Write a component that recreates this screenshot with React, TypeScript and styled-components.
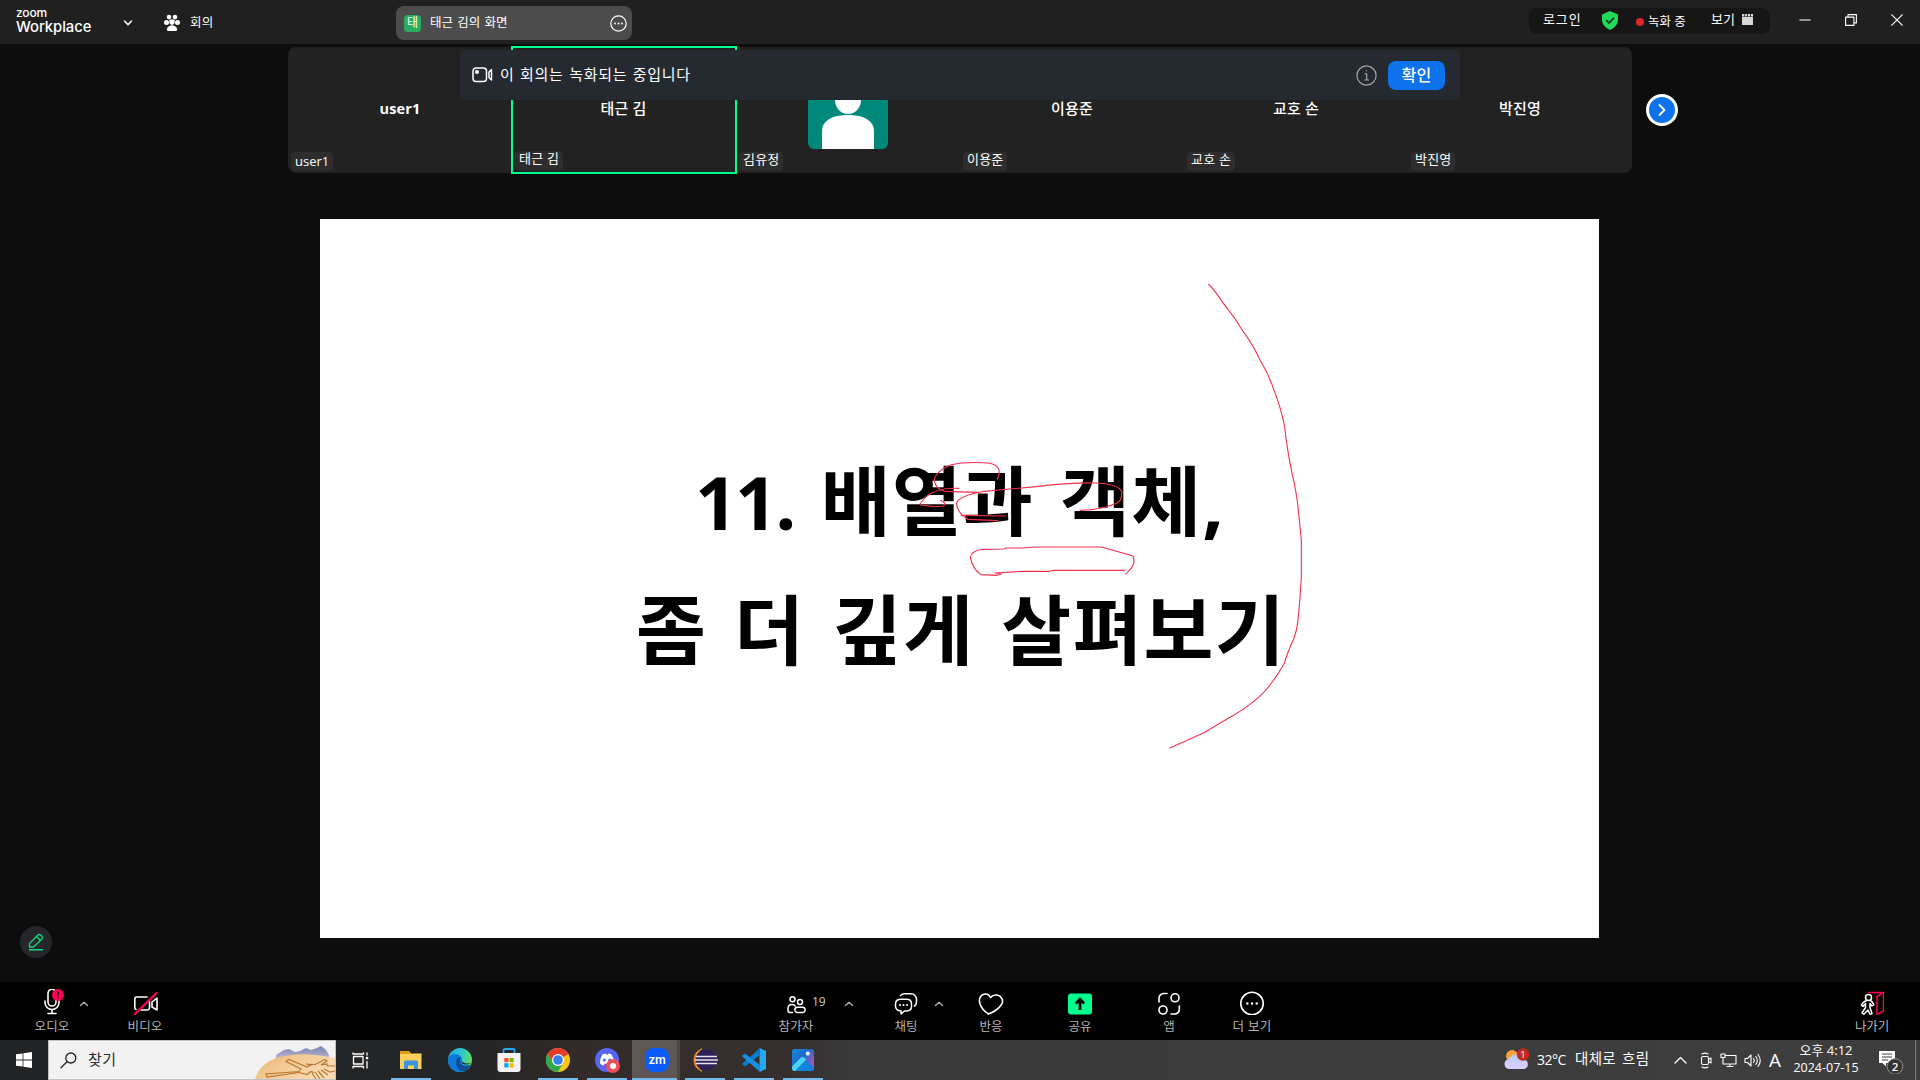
import React from "react";
import styled, { createGlobalStyle } from "styled-components";

const Global = createGlobalStyle`
  * { box-sizing: border-box; }
  body { margin: 0; background: #0d0d0d; overflow: hidden; }
  svg { display: block; flex: none; }
`;
const fontStack = `"Open Sans", "Noto Sans CJK KR", sans-serif`;

const Screen = styled.div`
  position: relative;
  width: 1920px;
  height: 1080px;
  display: flex;
  flex-direction: column;
  background: #0d0d0d;
  color: #fff;
  font-family: ${fontStack};
  overflow: hidden;
`;
const Text = styled.span<{ $size?: number; $ls?: number; $ws?: number; $weight?: number; $color?: string; $lh?: number }>`
  display: block;
  white-space: nowrap;
  font-size: ${(p) => p.$size ?? 12}px;
  letter-spacing: ${(p) => p.$ls ?? 0}px;
  word-spacing: ${(p) => p.$ws ?? 0}px;
  font-weight: ${(p) => p.$weight ?? 400};
  color: ${(p) => p.$color ?? "#fff"};
  line-height: ${(p) => p.$lh ?? 16}px;
`;

/* ---------- Title bar ---------- */
const TitleBar = styled.header`
  height: 44px;
  flex: none;
  display: flex;
  align-items: flex-start;
  background: #202020;
`;
const Brand = styled.div`
  width: 122px;
  padding: 6px 0 0 16px;
  font-family: Inter, sans-serif;
`;
const BrandSmall = styled.div`
  font-size: 12px;
  line-height: 13px;
  letter-spacing: -0.15px;
  font-weight: 500;
`;
const BrandLarge = styled.div`
  font-size: 14.8px;
  line-height: 16px;
  font-weight: 500;
  letter-spacing: -0.05px;
`;
const MeetingTab = styled.div`
  display: flex;
  width: 274px;
  padding-top: 14px;
  gap: 10px;
`;
const DownArrow = styled.div`
  width: 32px;
  padding-top: 5px;
`;
const ShareTab = styled.div`
  width: 236px;
  height: 34px;
  margin-top: 6px;
  padding: 0 5px 0 8px;
  border-radius: 8px;
  background: #4c4c4c;
  display: flex;
  align-items: center;
`;
const MiniAvatar = styled.div`
  width: 17px;
  height: 17px;
  margin: 0 9px 0 0;
  border-radius: 4px;
  background: #27ae60;
  display: flex;
  justify-content: center;
`;
const Grow = styled.div`flex: 1;`;
const StatusPill = styled.div`
  width: 241px;
  height: 26px;
  margin: 8px 0 0 897px;
  padding-left: 14px;
  border-radius: 8px;
  background: #161616;
  display: flex;
`;
const PillPart = styled.div<{ $w: number; $top: number }>`
  width: ${(p) => p.$w}px;
  padding-top: ${(p) => p.$top}px;
  display: flex;
  gap: 4px;
`;
const RecDot = styled.i`
  width: 8px;
  height: 8px;
  margin-top: 4px;
  border-radius: 50%;
  background: #e02828;
`;
const WindowButtons = styled.div`
  display: flex;
  padding: 14px 0 0 29px;
  gap: 34px;
`;

/* ---------- Participants strip ---------- */
const Strip = styled.section`
  height: 126px;
  margin: 3px 0 0 288px;
  flex: none;
  display: flex;
  align-items: center;
`;
const Tiles = styled.div`
  width: 1344px;
  height: 126px;
  border-radius: 8px;
  background: #222;
  display: flex;
`;
const Tile = styled.div<{ $active?: boolean }>`
  width: ${(p) => (p.$active ? 226 : 224)}px;
  height: ${(p) => (p.$active ? 128 : 126)}px;
  margin: ${(p) => (p.$active ? "-1px -1px -1px -1px" : "0")};
  padding: ${(p) => (p.$active ? "0 0 2px 2px" : "0 0 2px 3px")};
  border: ${(p) => (p.$active ? "2px solid #00ff8c" : "0")};
  display: flex;
  flex-direction: column;
  flex: none;
`;
const TileFace = styled.div`
  flex: 1;
  padding: 19px 3px 0 0;
  display: flex;
  align-items: center;
  justify-content: center;
`;
const NameShift = styled.div<{ $up: number }>`
  margin-bottom: ${(p) => p.$up}px;
`;
const TileName = styled.div`
  align-self: flex-start;
  height: 19px;
  padding: 0 4px;
  border-radius: 4px;
  background: #2d2d2d;
`;
const NextButton = styled.button`
  width: 32px;
  height: 32px;
  margin-left: 14px;
  padding: 0;
  border: 3px solid #fff;
  border-radius: 50%;
  background: #0e72ed;
  display: flex;
  align-items: center;
  justify-content: center;
`;
const Banner = styled.div`
  position: absolute;
  left: 460px;
  top: 50px;
  width: 1000px;
  height: 50px;
  padding: 0 15px 0 12px;
  border-radius: 5px;
  background: #252a31;
  display: flex;
  align-items: center;
`;
const ConfirmButton = styled.button`
  width: 57px;
  height: 29px;
  margin-left: 11px;
  padding: 0;
  border: 0;
  border-radius: 8px;
  background: #0e72ed;
  font-family: inherit;
`;

/* ---------- Shared slide ---------- */
const Stage = styled.main`
  flex: 1;
  display: flex;
  padding: 46px 0 0 320px;
`;
const Slide = styled.div`
  position: relative;
  width: 1279px;
  height: 719px;
  background: #fff;
  padding-top: 216px;
`;
const SlideLine = styled.div<{ $left: number; $ls: number; $ws: number }>`
  height: 129px;
  line-height: 131px;
  margin-left: ${(p) => p.$left}px;
  color: #000;
  font-size: 76px;
  font-weight: 700;
  letter-spacing: ${(p) => p.$ls}px;
  word-spacing: ${(p) => p.$ws}px;
  white-space: nowrap;
  font-family: "Open Sans", "Noto Sans CJK KR", sans-serif;
`;
const Ordinal = styled.span`
  font-size: 74px;
  letter-spacing: -2.2px;
`;
const Ink = styled.svg`
  position: absolute;
  inset: 0;
`;
const PenButton = styled.button`
  position: absolute;
  left: 20px;
  top: 926px;
  width: 32px;
  height: 32px;
  padding: 0;
  border: 0;
  border-radius: 50%;
  background: #25272b;
  display: flex;
  align-items: center;
  justify-content: center;
`;

/* ---------- Meeting toolbar ---------- */
const Toolbar = styled.footer`
  height: 58px;
  flex: none;
  background: #000;
  display: flex;
`;
const Tool = styled.div<{ $ml: number; $w: number }>`
  position: relative;
  width: ${(p) => p.$w}px;
  margin-left: ${(p) => p.$ml}px;
  padding-top: 7px;
  display: flex;
  flex-direction: column;
  align-items: center;
  gap: 3px;
`;
const Caret = styled.div<{ $ml: number }>`
  width: 10px;
  margin-left: ${(p) => p.$ml}px;
  padding-top: 19px;
`;
const Count = styled.div`
  position: absolute;
  left: 34px;
  top: 12px;
`;

/* ---------- Taskbar ---------- */
const Taskbar = styled.nav`
  height: 40px;
  flex: none;
  display: flex;
  background: linear-gradient(90deg, #222426 0, #242526 480px, #332b29 590px, #35302e 790px, #3a3a3a 850px, #3c3c3c 1500px, #3e3e3e 1920px);
`;
const Start = styled.div`
  width: 48px;
  display: flex;
  align-items: center;
  justify-content: center;
`;
const Search = styled.div`
  width: 288px;
  border: 1px solid #c2c2c2;
  background: #f2f2f2;
  display: flex;
  align-items: center;
  padding-left: 11px;
  gap: 11px;
`;
const AppButton = styled.div<{ $w: number; $line?: boolean; $active?: boolean }>`
  width: ${(p) => p.$w}px;
  padding-left: ${(p) => (p.$active ? 4 : 0)}px;
  display: flex;
  align-items: center;
  justify-content: center;
  background: ${(p) => (p.$active ? "#5f5753" : "transparent")};
  border-right: ${(p) => (p.$active ? "3px solid #4d4643" : "0")};
  box-shadow: ${(p) => (p.$line ? "inset 0 -2px #76b9ed" : "none")};
`;
const AppGap = styled.div<{ $w: number }>`width: ${(p) => p.$w}px;`;
const Tray = styled.div`
  margin-left: auto;
  display: flex;
  align-items: center;
  width: 417px;
`;
const TraySlot = styled.div<{ $w: number; $pad?: number }>`
  width: ${(p) => p.$w}px;
  padding-left: ${(p) => p.$pad ?? 0}px;
  flex: none;
`;
const Clock = styled.div`
  width: 90px;
  padding-bottom: 2px;
  text-align: center;
`;
const DesktopEdge = styled.div`
  width: 5px;
  height: 40px;
  margin-left: auto;
  border-left: 1px solid #7b7b7b;
`;

type Icon = { w: number; h: number; vb?: string; children: React.ReactNode; sw?: number; color?: string };
const Line = ({ w, h, vb, children, sw = 1.6, color = "#fff" }: Icon) => (
  <svg width={w} height={h} viewBox={vb ?? `0 0 ${w} ${h}`} fill="none" stroke={color} strokeWidth={sw} strokeLinecap="round" strokeLinejoin="round">
    {children}
  </svg>
);

const people = [
  { name: "user1", latin: true },
  { name: "태근 김", active: true },
  { name: "김유정", avatar: true },
  { name: "이용준" },
  { name: "교호 손" },
  { name: "박진영" },
];

const Portrait = () => (
  <svg width="80" height="80" viewBox="0 0 80 80">
    <rect width="80" height="80" rx="6" fill="#00897b" />
    <ellipse cx="40" cy="31" rx="13" ry="14" fill="#fff" />
    <path d="M14 80V62Q14 51 29 47Q40 45 51 47Q66 51 66 62V80Z" fill="#fff" />
  </svg>
);

const UpCaret = ({ ml }: { ml: number }) => (
  <Caret $ml={ml}>
    <Line w={10} h={6} sw={1.5} color="#aaa"><path d="M1.5 4.5 5 1.3 8.500 4.500" /></Line>
  </Caret>
);

const ToolLabel = ({ children, ls = 0.1 }: { children: string; ls?: number }) => (
  <Text $size={12.5} $color="#b4b4b4" $ls={ls} $lh={18}>{children}</Text>
);

export default function App() {
  return (
    <Screen>
      <Global />
      <TitleBar>
        <Brand>
          <BrandSmall>zoom</BrandSmall>
          <BrandLarge>Workplace</BrandLarge>
        </Brand>
        <MeetingTab>
          <DownArrow>
            <Line w={12} h={8} sw={1.5}><path d="M2.5 2 6 5.8 9.5 2" /></Line>
          </DownArrow>
          <svg width="16" height="18" viewBox="0 0 16 18" fill="#fff">
            <circle cx="5" cy="3" r="2.3" /><circle cx="11" cy="3" r="2.3" />
            <circle cx="2.5" cy="8.4" r="2.5" /><circle cx="13.5" cy="8.4" r="2.5" />
            <circle cx="8" cy="8" r="2.6" />
            <path d="M8 11.5c3 0 5.2 2 5.2 4 0 1-.7 1.5-1.8 1.5H4.6c-1.1 0-1.8-.5-1.8-1.5 0-2 2.2-4 5.2-4z" />
            <path d="M4.5 5.5 8 12 11.5 5.5z" opacity=".7" />
          </svg>
          <Text $size={12.5} $lh={17} $ls={0.3}>회의</Text>
        </MeetingTab>
        <ShareTab>
          <MiniAvatar><Text $size={12} $lh={15}>태</Text></MiniAvatar>
          <Text $size={12.5} $ws={1}>태근 김의 화면</Text>
          <Grow />
          <Line w={17} h={17} sw={1.2}>
            <circle cx="8.5" cy="8.5" r="7.7" />
            <path d="M5 8.5h.1M8.5 8.5h.1M12 8.5h.1" strokeWidth="1.8" />
          </Line>
        </ShareTab>
        <StatusPill>
          <PillPart $w={58} $top={3}><Text $size={13} $ls={0.9}>로그인</Text></PillPart>
          <PillPart $w={35} $top={3}>
            <svg width="18" height="19" viewBox="0 0 18 19">
              <path d="M9 0 17 3.5V9q0 6-8 10Q1 15 1 9V3.5Z" fill="#23d959" />
              <path d="M5.3 9.2 8 12l5-5.2" stroke="#163a20" strokeWidth="1.8" fill="none" />
            </svg>
          </PillPart>
          <PillPart $w={75} $top={6}><RecDot /><Text $size={12.5}>녹화 중</Text></PillPart>
          <PillPart $w={59} $top={3}>
            <Text $size={13} $ls={0.1}>보기</Text>
            <svg width="16" height="16" viewBox="0 0 16 16" fill="#d8d8d8">
              <path d="M3 3h2.4v2.6H3zM6.2 3h2v2.600h-2zM9 3h2v2.600H9zM11.800 3H14v2.600h-2.200zM3 6h11v8H3z" />
            </svg>
          </PillPart>
        </StatusPill>
        <WindowButtons>
          <Line w={12} h={12} sw={1.5} color="#bbb"><path d="M1 6h10" /></Line>
          <Line w={12} h={12} sw={1.1}><path d="M.6 3.1h8.3v8.3H.6zM3 3V.6h8.4v8.3H9" /></Line>
          <Line w={12} h={12} sw={1.2}><path d="M.8.8 11.2 11.2M11.2.8.8 11.2" /></Line>
        </WindowButtons>
      </TitleBar>

      <Strip>
        <Tiles>
          {people.map((p) => (
            <Tile key={p.name} $active={p.active}>
              <TileFace>
                {p.avatar ? <Portrait /> : (
                  <NameShift $up={p.latin ? 0 : 2}>
                    <Text $size={p.latin ? 14.5 : 15} $weight={p.latin ? 700 : 500} $ls={0.2}>{p.name}</Text>
                  </NameShift>
                )}
              </TileFace>
              <TileName><Text $size={13} $ls={p.latin ? 0 : 0.2} $lh={p.latin ? 18 : 15}>{p.name}</Text></TileName>
            </Tile>
          ))}
        </Tiles>
        <NextButton>
          <Line w={10} h={16} sw={1.8}><path d="M2.500 3 7.500 8 2.500 13" /></Line>
        </NextButton>
      </Strip>

      <Stage>
        <Slide>
          <SlideLine $left={375} $ls={1} $ws={6}><Ordinal>11.</Ordinal> 배열과 객체,</SlideLine>
          <SlideLine $left={316} $ls={1.2} $ws={6}>좀 더 깊게 살펴보기</SlideLine>
          <Ink width="1279" height="719" viewBox="320 219 1279 719" fill="none" stroke="#f5304e" strokeWidth="1.1">
            <g transform="translate(1140 260) scale(.33333)">
              <path vectorEffect="non-scaling-stroke" d="M205 72Q216 80 250 130 285 172 310 215 340 256 360 300 385 340 400 385 422 440 434 500 440 560 455 635 470 700 474 740L484 840V950Q480 1020 475 1070 472 1110 460 1140 445 1170 433 1210 410 1250 390 1275 370 1302 340 1325 310 1350 265 1375 225 1398 195 1417L88 1465" />
            </g>
            <g transform="translate(620 440) scale(.43367 .33333)">
              <path vectorEffect="non-scaling-stroke" d="M869 118Q876 105 874 90 870 73 850 69 800 64 764 74 725 95 725 122 728 148 748 154L825 157M782 145Q730 142 706 170 690 190 693 195L724 200M738 181Q754 188 746 198L725 200" />
              <path vectorEffect="non-scaling-stroke" d="M1060 211Q1110 210 1145 190 1158 182 1157 155 1150 133 1100 129 1040 127 960 140L840 154Q780 168 776 190 778 220 802 238L872 242M786 226 890 228" />
              <path vectorEffect="non-scaling-stroke" d="M1165 403Q1192 375 1183 348L1110 321 960 321 925 324 890 324 885 327 835 328Q808 335 808 352 812 385 832 404L868 406 880 402 864 399 930 394 990 394 1000 391H1165" />
            </g>
          </Ink>
        </Slide>
      </Stage>

      <Toolbar>
        <Tool $ml={34} $w={36}>
          <Line w={24} h={26}>
            <path d="M14.5 1.2A4 4 0 0 0 8 4v9a4 4 0 0 0 8 0V8M5 12v1.5a7 7 0 0 0 14 0V12M12 20.5V24.500M8 24.500h8" />
            <circle cx="18" cy="6" r="6" fill="#ff0055" stroke="none" />
            <path d="M18 2.8v3.7M18 9v.1" stroke="#300010" strokeWidth="1.8" />
          </Line>
          <ToolLabel>오디오</ToolLabel>
        </Tool>
        <UpCaret ml={9} />
        <Tool $ml={38} $w={36}>
          <Line w={26} h={26}>
            <path d="M4 20.5a2 2 0 0 1-1.200-2V10a2 2 0 0 1 2-2H15M17.500 12.500V18.500a2.500 2.500 0 0 1-2.500 2.500H9M20 13l5-4v12l-5-3z" />
            <path d="M3 25 24.500 4" stroke="#ff0055" strokeWidth="2.400" />
          </Line>
          <ToolLabel>비디오</ToolLabel>
        </Tool>
        <Tool $ml={615} $w={36}>
          <Line w={24} h={26} sw={1.5}>
            <circle cx="8.5" cy="10.3" r="2.5" /><circle cx="16" cy="13" r="2.5" />
            <path d="M8.5 23.500H6a2 2 0 0 1-2-2v-2c0-2.500 1.500-4 4-4 1.500 0 2.500.5 3.200 1.500M13.500 18.300h5a2.600 2.600 0 0 1 0 5.200h-5a2.600 2.600 0 0 1 0-5.200z" />
          </Line>
          <ToolLabel>참가자</ToolLabel>
          <Count><Text $size={12} $color="#c8c8c8">19</Text></Count>
        </Tool>
        <UpCaret ml={30} />
        <Tool $ml={40} $w={24}>
          <Line w={24} h={26} sw={1.5}>
            <path d="M6.500 6.500Q8 4.800 10.500 4.800H17a5.500 5.500 0 0 1 5.500 5.500v2.500q0 3-2 4.200M7 10.300h5.500q5 0 5 4.700v2.300Q17.500 22 12.500 22h-2l-3.500 3v-3Q1.500 21.500 1.500 17.300V15Q1.500 10.300 7 10.300z" />
            <path d="M6 16h.1M9.500 16h.1M13 16h.1" strokeWidth="2" />
          </Line>
          <ToolLabel>채팅</ToolLabel>
        </Tool>
        <UpCaret ml={16} />
        <Tool $ml={35} $w={24}>
          <Line w={26} h={26}>
            <path d="M10.500 25Q4 21 2 15C0 9 3.500 5 7.500 5q3.500 0 5 3.500Q15 5.500 19 6c4.500.8 7 5.500 4.500 9.500-3 4.500-7.500 7.500-13 9.500z" />
          </Line>
          <ToolLabel>반응</ToolLabel>
        </Tool>
        <Tool $ml={65} $w={24}>
          <svg width="24" height="26" viewBox="0 0 24 26">
            <rect y="4.500" width="24" height="21" rx="3" fill="#00ff8c" />
            <path d="M12 21v-9M7.800 14.500 12 10.200l4.200 4.300" stroke="#000" strokeWidth="2.800" fill="none" />
          </svg>
          <ToolLabel>공유</ToolLabel>
        </Tool>
        <Tool $ml={65} $w={24}>
          <Line w={24} h={26}>
            <circle cx="18" cy="8.8" r="4" /><circle cx="6" cy="21" r="4" />
            <path d="M2 13V9a4.500 4.500 0 0 1 4.500-4.500H10M22.300 17v3.500a4.500 4.500 0 0 1-4.500 4.500H14" />
          </Line>
          <ToolLabel>앱</ToolLabel>
        </Tool>
        <Tool $ml={52} $w={38}>
          <Line w={24} h={26}>
            <circle cx="12" cy="14.5" r="11.2" />
            <path d="M7.300 14.500h.1M12 14.500h.1M16.700 14.500h.1" strokeWidth="2.400" />
          </Line>
          <ToolLabel ls={0.3}>더 보기</ToolLabel>
        </Tool>
        <Tool $ml={583} $w={36}>
          <Line w={24} h={26} sw={1.5}>
            <path d="M9 3.500h14.500v18.500L17 25.500V7.500l6.500-4" stroke="#ff0055" />
            <circle cx="8.500" cy="8.500" r="3" />
            <path d="M6.500 11.500Q2.500 13 1.500 16.500l1.500 1 2.500-3v4L2 24l1.800 1.200L8 21l2 4.300 2-.7-2-6.100v-4l2 2.500 1.800-1.200Q12.500 12.500 10.500 11.500" />
          </Line>
          <ToolLabel ls={-0.2}>나가기</ToolLabel>
        </Tool>
      </Toolbar>

      <Taskbar>
        <Start>
          <svg width="16" height="16" viewBox="0 0 16 16" fill="#fff"><path d="M0 2.300 6.600 1.400V7.600H0zM7.400 1.200 16 0v7.600H7.400zM0 8.400h6.600v6.200L0 13.700zM7.400 8.400H16V16l-8.600-1.200z" /></svg>
        </Start>
        <Search>
          <Line w={17} h={17} sw={1.3} color="#222"><circle cx="10.8" cy="6" r="5" /><path d="M7 9.700 1 15.800" /></Line>
          <NameShift $up={2}><Text $size={15} $color="#2b2b2b" $lh={20} $ls={0.4}>찾기</Text></NameShift>
          <Grow />
          <svg width="80" height="38" viewBox="0 0 80 38">
            <defs>
              <linearGradient id="hill" x1="0" x2="0" y1="0" y2="1"><stop offset="0" stopColor="#7484b4" /><stop offset="1" stopColor="#c3b2cc" /></linearGradient>
              <linearGradient id="sand" x1="0" x2="1" y1="0" y2=".5"><stop offset="0" stopColor="#d99f62" /><stop offset=".35" stopColor="#f2c48c" /><stop offset="1" stopColor="#f9dbb3" /></linearGradient>
            </defs>
            <path d="M21 14 29 9l5-1 6 3 5-1 6-3 5 2 6-2 4-2 5 4 3 5v4H21z" fill="url(#hill)" />
            <path d="M0 38Q5 22 24 16 40 12.500 54 13.500 68 14 80 17V38z" fill="url(#sand)" />
            <path d="M44 31.500 12 36 11 33 44 30.500 46 28 31 20.500 34 18.500 52 26 56 24 51 23l9 .5 10-5 2 1.500-6 4 6-1v2h8M57 32l4 6M60 31l5 7M63 30l6 7M66 29l7 5M69 28l6 3 5-1M44 31.500l8 2 4-3 3 1" fill="none" stroke="#b9772c" strokeWidth="1.2" />
          </svg>
        </Search>
        <AppButton $w={48}>
          <Line w={17} h={17} sw={1.3}><path d="M1.500 4.500h9.500v7.500H1.500zM1 .8v1.200h10.500V.8M1 16v-1.500h10.500V16M15 1v2M15 9.500V16" /><path d="M13.800 4.800h2.400v2.400h-2.400z" fill="#fff" stroke="none" /></Line>
        </AppButton>
        <AppGap $w={7} />
        <AppButton $w={40} $line>
          <svg width="22" height="22" viewBox="0 0 22 22">
            <path d="M0 2.500h9l2 2h10.500V20H0z" fill="#fdd05c" /><path d="M0 2h9.500v3H0z" fill="#e09b10" />
            <path d="M4 20v-7q0-1.500 1.500-1.500h11q1.500 0 1.500 1.500v7h-4v-3.500H8V20z" fill="#3a96dc" />
          </svg>
        </AppButton>
        <AppGap $w={9} />
        <AppButton $w={40}>
          <svg width="24" height="24" viewBox="0 0 24 24">
            <defs><linearGradient id="edge" x1="0" x2="1" y1=".3" y2=".5"><stop offset="0" stopColor="#1da5e0" /><stop offset=".55" stopColor="#31c8d0" /><stop offset="1" stopColor="#66dd50" /></linearGradient></defs>
            <circle cx="12" cy="12" r="12" fill="url(#edge)" />
            <path d="M0 12C1 7 5 5.500 9 6.500c5 1.200 5.500 4.500 4.500 6.500-1.500 3 2 5.500 9 3.500C20 22 15 24 12 24 5 24 0 19 0 12z" fill="#0c78d8" />
            <path d="M9.500 10C6.500 14 8 22 15.500 23.500c3-.8 5.500-3 7-6.500-4 2-9.500 1-10.500-2.500-.5-2 .5-3 .5-4.500-1-1.200-2.200-1-3 0z" fill="#0f4d9b" />
            <path d="M13.700 13c-1.300 3 3 4.500 7 3 2.500-1 3.300-2.500 3.300-4.500 0 3-2 4-5 4-2.500 0-4.500-1-5.300-2.500z" fill="#222426" />
          </svg>
        </AppButton>
        <AppGap $w={9} />
        <AppButton $w={40}>
          <svg width="24" height="24" viewBox="0 0 24 24">
            <path d="M6.500 6V2.500Q6.500 1 8 1h8q1.500 0 1.500 1.500V6" fill="none" stroke="#25a9f0" strokeWidth="1.8" />
            <path d="M.5 5h23v16q0 3-3 3h-17q-3 0-3-3z" fill="#f3f3f3" />
            <path d="M7.300 10h4.200v4.200H7.300z" fill="#f25022" /><path d="M12.500 10h4.200v4.200h-4.200z" fill="#7fba00" /><path d="M7.300 15.200h4.200v4.200H7.300z" fill="#00a4ef" /><path d="M12.500 15.200h4.200v4.200h-4.200z" fill="#ffb900" />
          </svg>
        </AppButton>
        <AppGap $w={9} />
        <AppButton $w={40} $line>
          <svg width="24" height="24" viewBox="0 0 24 24">
            <circle cx="12" cy="12" r="12" fill="#fcc41d" />
            <path d="M12 12 7 14.900 1.600 6A12 12 0 0 1 22.400 6z" fill="#e33b2e" />
            <path d="M1.600 6A12 12 0 0 0 12 24l5-9-5-1-5 1z" fill="#2da94f" />
            <circle cx="12" cy="12" r="6" fill="#fff" /><circle cx="12" cy="12" r="4.800" fill="#3a7ef0" />
          </svg>
        </AppButton>
        <AppGap $w={9} />
        <AppButton $w={40} $line>
          <svg width="26" height="26" viewBox="0 0 26 26">
            <circle cx="13" cy="13" r="12" fill="#5865f2" />
            <path d="M8.500 7.500q2-1 3-1l.5 1h2l.5-1q1.200 0 3 1 2.800 4 2.500 9-2 1.800-3.500 2l-1-1.700h-5L9.500 18.500q-1.500-.2-3.500-2-.3-5 2.500-9z" fill="#fff" />
            <circle cx="10.300" cy="13" r="1.600" fill="#5865f2" /><circle cx="15.700" cy="13" r="1.600" fill="#5865f2" />
            <circle cx="19" cy="19" r="7" fill="#ed4f55" /><circle cx="19" cy="19" r="3" fill="#fff" />
          </svg>
        </AppButton>
        <AppGap $w={5} />
        <AppButton $w={48} $line $active>
          <svg width="24" height="24" viewBox="0 0 24 24">
            <rect width="24" height="24" rx="8.5" fill="#0b5cff" />
            <text x="12" y="16.2" textAnchor="middle" fill="#fff" fontFamily="Inter, sans-serif" fontWeight="600" fontSize="12" letterSpacing="-.3">zm</text>
          </svg>
        </AppButton>
        <AppGap $w={5} />
        <AppButton $w={40} $line>
          <svg width="26" height="24" viewBox="0 0 26 24">
            <path d="M10 .8Q2 4 2 12t8 11.200Q4 19 4 12T10 .8z" fill="#f6911e" stroke="#f6911e" />
            <circle cx="14.5" cy="12" r="11" fill="#2c2255" />
            <path d="M4 8.500h21M3 12h23M4 15.500h21" stroke="#e6e4f0" strokeWidth="1.7" />
          </svg>
        </AppButton>
        <AppGap $w={9} />
        <AppButton $w={40} $line>
          <svg width="24" height="24" viewBox="0 0 24 24">
            <path d="M17.500 0 24 3v18l-6.500 3z" fill="#29a8f2" />
            <path d="M18 0v7L3 18.500.3 16.500V15.500z" fill="#0a7bc8" /><path d="M18 24v-7L3 5.500.3 7.500V8.500z" fill="#1490df" />
          </svg>
        </AppButton>
        <AppGap $w={9} />
        <AppButton $w={40} $line>
          <svg width="22" height="22" viewBox="0 0 22 22">
            <defs><linearGradient id="photo" x1="0" x2="1" y1="0" y2="1"><stop offset="0" stopColor="#158ae0" /><stop offset=".4" stopColor="#1c6cc8" /><stop offset=".75" stopColor="#9c58b8" /></linearGradient></defs>
            <rect width="22" height="22" rx="3" fill="url(#photo)" />
            <path d="M0 18 8.500 9q2-1.800 4 0L22 19q0 3-3 3H3q-3 0-3-3z" fill="#1085dc" /><path d="M0 17.500 8.500 9q2-1.800 4 0l1.500 1.500L3 22q-3 0-3-3z" fill="#4cd4f8" />
            <circle cx="15.800" cy="4.500" r="2" fill="#fff" />
          </svg>
        </AppButton>
        <Tray>
          <TraySlot $w={34}>
            <svg width="28" height="24" viewBox="0 0 28 24">
              <defs><linearGradient id="cloud" x1="0" x2="0" y1="0" y2="1"><stop offset="0" stopColor="#b8ccf8" /><stop offset="1" stopColor="#d9d0fa" /></linearGradient></defs>
              <circle cx="9" cy="8" r="6" fill="#f6a13c" />
              <path d="M7 21a5 5 0 0 1-1-10A7.500 7.500 0 0 1 20 11.500a4.800 4.800 0 0 1 1 9.500z" fill="url(#cloud)" />
              <circle cx="20" cy="6.500" r="6.200" fill="#c42b1c" /><text x="20" y="10" fontSize="9.5" textAnchor="middle" fill="#fff">1</text>
            </svg>
          </TraySlot>
          <TraySlot $w={38}><Text $size={14} $ls={-0.5}>32°C</Text></TraySlot>
          <TraySlot $w={99}><NameShift $up={2}><Text $size={14.5} $ws={2} $ls={0.3}>대체로 흐림</Text></NameShift></TraySlot>
          <TraySlot $w={26}><Line w={13} h={8} sw={1.3}><path d="M1 7 6.500 1.500 12 7" /></Line></TraySlot>
          <TraySlot $w={20}><Line w={14} h={17} sw={1.1}><path d="M3 4.500h4q1.500 0 1.500 1.500v5q0 1.500-1.500 1.500H3Q1.500 12.500 1.500 11V6Q1.500 4.500 3 4.500zM8.500 7.500l2.500-1.500v5L8.500 9.500M2 2q3-1.800 6 0M2 15q3 1.800 6 0" /></Line></TraySlot>
          <TraySlot $w={24}><Line w={17} h={15} sw={1.1}><path d="M5.500 2.500h10.500v8.500H5M10 11v2.500M7 13.500h6M1 1h4v3.500H1zM3 4.500V11h2" /></Line></TraySlot>
          <TraySlot $w={25}><Line w={17} h={15} sw={1.1}><path d="M1 5.500h2.500L7 2v11L3.500 9.500H1zM9.500 5.500q1.500 2 0 4M11.800 3.500q3 4 0 8M14 1.500q4.500 6 0 12" /></Line></TraySlot>
          <TraySlot $w={12}><Text $size={19} $lh={24}>A</Text></TraySlot>
          <Clock>
            <Text $size={13} $lh={18}>오후 4:12</Text>
            <Text $size={12.5} $lh={18}>2024-07-15</Text>
          </Clock>
          <TraySlot $w={34} $pad={8}>
            <svg width="26" height="28" viewBox="0 0 26 28">
              <path d="M0 5h16v12H7v3.500L3.500 17H0z" fill="#fff" /><path d="M3 8h10M3 11h10M3 14h6" stroke="#3c3c3c" />
              <circle cx="16" cy="20.500" r="7.800" fill="#343434" stroke="#8c8c8c" />
              <text x="16" y="24.500" fontSize="11.500" fontWeight="600" textAnchor="middle" fill="#fff">2</text>
            </svg>
          </TraySlot>
          <DesktopEdge />
        </Tray>
      </Taskbar>

      <Banner>
        <Line w={21} h={16} sw={1.5}>
          <path d="M4 1h7.500a3 3 0 0 1 3 3v7.500a3 3 0 0 1-3 3H4a3 3 0 0 1-3-3V4a3 3 0 0 1 3-3zM17 5l2.500-2.500v10.500l-2.500-2.500z" />
          <circle cx="5" cy="5" r="1.300" fill="#fff" />
        </Line>
        <AppGap $w={7} />
        <NameShift $up={3}><Text $size={15} $ls={0.7} $lh={22} $ws={1}>이 회의는 녹화되는 중입니다</Text></NameShift>
        <Grow />
        <Line w={21} h={21} sw={1.2} color="#a3a5a8">
          <circle cx="10.5" cy="10.5" r="9.6" /><path d="M9 8.800h1.700V15M8.800 15h3.800M10.400 5.600v.2" />
        </Line>
        <ConfirmButton><Text $size={16} $weight={500} $lh={27} $ls={0.3}>확인</Text></ConfirmButton>
      </Banner>
      <PenButton>
        <Line w={16} h={18} sw={1.4} color="#12d67c">
          <path d="M1.500 13.500V10.500L10 2q1.300-1.200 2.500 0l1.500 1.500q1.200 1.300 0 2.500L5.500 14H1.500M8.500 3.500l4 4M1.500 16.700h13" />
        </Line>
      </PenButton>
    </Screen>
  );
}
